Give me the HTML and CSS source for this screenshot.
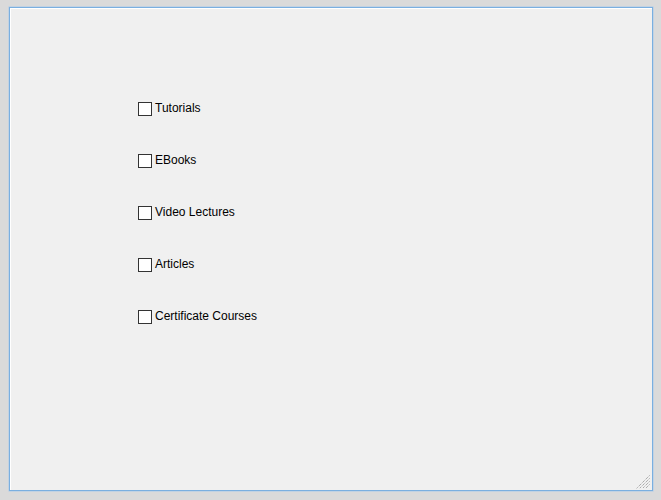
FILE: index.html
```html
<!DOCTYPE html>
<html>
<head>
<meta charset="utf-8">
<link rel="stylesheet" href="styles.css">
</head>
<body>
<div class="frame">
  <ul class="list">
    <li class="item"><span class="box"></span><span class="label">Tutorials</span></li>
    <li class="item"><span class="box"></span><span class="label">EBooks</span></li>
    <li class="item"><span class="box"></span><span class="label">Video Lectures</span></li>
    <li class="item"><span class="box"></span><span class="label">Articles</span></li>
    <li class="item"><span class="box"></span><span class="label">Certificate Courses</span></li>
  </ul>
  <svg class="grip" width="14" height="14" viewBox="0 0 14 14">
    <g stroke="#8c8c8c" stroke-width="1" stroke-dasharray="1 1">
      <line x1="13.5" y1="0.5" x2="0.5" y2="13.5"/>
      <line x1="13.5" y1="3.5" x2="3.5" y2="13.5"/>
      <line x1="13.5" y1="6.5" x2="6.5" y2="13.5"/>
      <line x1="13.5" y1="9.5" x2="9.5" y2="13.5"/>
    </g>
  </svg>
</div>
</body>
</html>
```
FILE: styles.css
```css
html, body {
  margin: 0;
  padding: 0;
  background: #dadada;
  font-family: "Liberation Sans", Arial, sans-serif;
}
body {
  padding: 7px 0 0 9px;
  height: 500px;
  box-sizing: border-box;
  overflow: hidden;
}
.frame {
  position: relative;
  width: 644px;
  height: 484px;
  box-sizing: border-box;
  border: 1px solid #7aafe0;
  background: #f0f0f0;
  box-shadow: inset 1px 1px 0 #ffffff, 0 0 0 0.5px #a9c9ea;
}
.list {
  list-style: none;
  margin: 0;
  padding: 94px 0 0 128px;
  display: flex;
  flex-direction: column;
  gap: 38px;
}
.item {
  display: flex;
  align-items: center;
  gap: 3px;
  height: 14px;
  font-size: 12px;
  color: #000;
}
.box {
  width: 14px;
  height: 14px;
  box-sizing: border-box;
  border: 1px solid #333333;
  background: #ffffff;
}
.label {
  line-height: 14px;
  position: relative;
  top: -1px;
}
.grip {
  position: absolute;
  right: 2px;
  bottom: 1px;
}
```
